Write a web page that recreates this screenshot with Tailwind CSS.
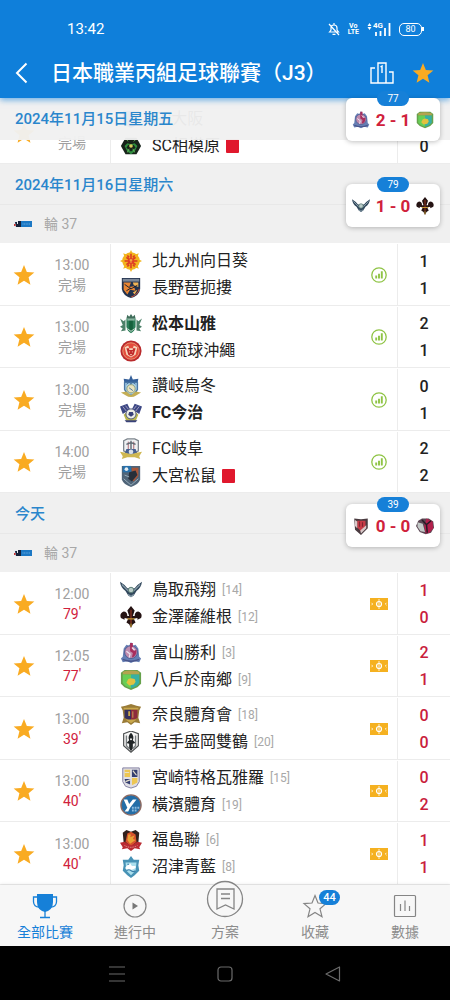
<!DOCTYPE html>
<html lang="zh-Hant">
<head>
<meta charset="utf-8">
<meta name="viewport" content="width=device-width, initial-scale=1">
<title>日本職業丙組足球聯賽（J3）</title>
<script src="https://cdn.jsdelivr.net/npm/@tailwindcss/browser@4"></script>
</head>
<body class="min-h-screen flex flex-col bg-white font-['Roboto','Noto_Sans_CJK_TC',sans-serif] text-[#222]">

<svg class="hidden" aria-hidden="true">
  <symbol id="star" viewBox="0 0 24 24"><path fill="#f9ab22" d="M12 1l3.100 7.600 8.200.6-6.300 5.300 2 8L12 18.200l-7 4.300 2-8L.7 9.200l8.200-.6z"/></symbol>
  <symbol id="stats" viewBox="0 0 16 16"><circle cx="8" cy="8" r="7.200" fill="none" stroke="#8fc445" stroke-width="1.300"/><path d="M5.200 8.500v3M8 6.800v4.700M10.800 4.200v7.300" stroke="#8fc445" stroke-width="1.900"/></symbol>
  <symbol id="pitch" viewBox="0 0 18 12"><path fill="#f5b120" d="M0 0h18v12H0z"/><circle cx="9" cy="6" r="2.500" fill="none" stroke="#fff" stroke-width="1.200"/><path stroke="#fff" d="M9 1v10M1.500 4.800l1.200 1.200-1.200 1.200M16.500 4.800L15.300 6l1.200 1.200" fill="none" stroke-width=".8"/></symbol>
  <symbol id="league" viewBox="0 0 18 6"><path fill="#e9edf2" d="M0 0h6v6H0z"/><path fill="#16213a" d="M1 1h2v2h1V0h3v6H2z"/><path fill="#c33" d="M0 3h1.500v2H0z"/><path fill="#1c78c4" d="M7 0h11v6H7z"/><path stroke="#4f9ad6" d="M8.500 3h8" stroke-dasharray="1 .6" stroke-width="1.500"/></symbol>

  <symbol id="osaka" viewBox="0 0 24 24"><path fill="#2a5da8" d="M3 3h18v10q-2 6-9 9-7-3-9-9z"/></symbol>
  <symbol id="sagamihara" viewBox="0 0 24 24"><path fill="#17231a" d="M6 3h12l5 9-5 9H6l-5-9z"/><path fill="#2f8b3d" d="M5 12l3-3 4 1 4-1 3 3-3 6-4 3-4-3z"/><path fill="#17231a" d="M9 11h6l2 3-5 4-5-4z"/><circle cx="12" cy="12" r="2" fill="#d9cc5a"/><path stroke="#68b35c" d="M8 19l2-4M16 19l-2-4M7 5l2 2M17 5l-2 2"/></symbol>
  <symbol id="kitakyushu" viewBox="0 0 24 24"><g fill="#f2b41e"><circle cx="12" cy="12" r="9.500"/><path d="M12 0l3 6H9zM12 24l3-6H9zM0 12l6-3v6zM24 12l-6-3v6zM3.500 3.500L10 6l-4 4zM20.500 3.500L14 6l4 4zM3.500 20.500L10 18l-4-4zM20.500 20.500L14 18l4-4z"/></g><path stroke="#dc3a22" stroke-width="1.700" fill="none" d="M7 8l10 8M17 8L7 16M12 4v16M5 12h14M8 6l2 2M16 6l-2 2M8 18l2-2M16 18l-2-2"/><circle cx="12" cy="12" r="3.400" fill="#e2402a"/><path stroke="#f7d04b" d="M10.500 11h3M12 10v4"/></symbol>
  <symbol id="nagano" viewBox="0 0 24 24"><path fill="#22324e" d="M2 1h20v12q-1 7-10 10Q3 20 2 13z"/><path fill="#7c8797" d="M3 2h18v3H3z"/><path fill="#e98532" d="M4 6h8l-2 5 5-1 2 5-6-1-3 5-4-5z"/><path fill="#f1b455" d="M14 6h6v5l-5-2zM14 17l5-3-3 5z"/><path stroke="#151d30" d="M5 8l7 5 7-4M7 15l5-3" fill="none"/><path stroke="#d8573b" d="M12 22q8-3 9-9" fill="none"/></symbol>
  <symbol id="matsumoto" viewBox="0 0 24 24"><path fill="#2b7d58" d="M7 6h10v9q-1 5-5 7-4-2-5-7z"/><path fill="#3f6d5a" d="M8 2l2 2 2-3 2 3 2-2 1 4H7z"/><path fill="#4c8068" d="M0 6l4 3 2-2v12l-5 1 2-3-3-2 3-2zM24 6l-4 3-2-2v12l5 1-2-3 3-2-3-2z"/><path fill="#15613c" d="M10 8h4v10l-2 2-2-2z"/><path stroke="#cfe0d6" d="M8 7.500h8M8 17l4 3 4-3" fill="none"/></symbol>
  <symbol id="ryukyu" viewBox="0 0 24 24"><circle cx="12" cy="12" r="11.500" fill="#b92a2c"/><circle cx="12" cy="12" r="9" fill="#e34c3c" stroke="#f2b287" stroke-width=".8"/><path fill="#f6d6bb" d="M5 8l4-2 1 3h4l1-3 4 2-2 8-5 3-5-3z"/><path fill="#c12b2b" d="M7 9h3v2h4V9h3l-2 7-3 2-3-2z"/><path stroke="#f6d6bb" d="M10 13h1M13 13h1M11 16h2"/></symbol>
  <symbol id="sanuki" viewBox="0 0 24 24"><path fill="#35609a" d="M4 4l6 1 2-5 2 5 6-1-1 6H5z"/><path fill="#a4cbe2" stroke="#4a77a5" stroke-width="1.500" d="M5 8h14v8l-4 6H9l-4-6z"/><path fill="#c4ae55" d="M1 19l6-1 5 4 5-4 6 1-5 3q-6 4-12 0z"/><circle cx="12" cy="15" r="4.500" fill="#e9e3be" stroke="#8f9f74"/><path stroke="#3f6a9b" d="M7 10l3-2 2 2 2-2 3 2M10 14l4 3" fill="none"/></symbol>
  <symbol id="imabari" viewBox="0 0 24 24"><path fill="#3c4784" d="M0 5l8-3 3 6-8 5zM24 5l-8-3-3 6 8 5z"/><path stroke="#a9a5c4" d="M3 5l4 5M6 4l4 5M21 5l-4 5M18 4l-4 5"/><path fill="#b9b64c" d="M4 14l4-4h8l4 4-3 7H7z"/><circle cx="12" cy="13" r="5.500" fill="#eceee5" stroke="#464f77"/><path fill="#39427a" d="M10 11h4l1 3-3 2-3-2zM5 20h14l-2 2H7z"/></symbol>
  <symbol id="gifu" viewBox="0 0 24 24"><path fill="#eff1f3" stroke="#7d858d" stroke-width="1.400" d="M4 3l4-2h8l4 2v11l-8 5-8-5z"/><path stroke="#a95c68" d="M9 4v10M15 4v10"/><path stroke="#5e6872" stroke-width="1.500" d="M12 3v9M7 7l5-2 5 2" fill="none"/><path fill="#46608f" d="M7 12h10l2 5H5z"/><path fill="#ceb751" d="M0 15l6 1 6 2 6-2 6-1-3 5 1 3-6-2H8l-6 2 1-3z"/><circle cx="12" cy="15" r="2.500" fill="#d9e1e8"/></symbol>
  <symbol id="omiya" viewBox="0 0 24 24"><path fill="#4f6478" d="M2 1h20v15q-2 5-10 8Q4 21 2 16z"/><path fill="#2870aa" d="M3 1h9v7H3z"/><circle cx="7" cy="4.500" r="2" fill="#e8edf0"/><path fill="#a85639" d="M13 3h7v9l-5 6-4-4 2-5z"/><path fill="#272f39" d="M10 8l7-2 2 5-6 7-4-3z"/><path stroke="#9cb2bf" d="M4 15l8 7 8-7M5 11l5 2" fill="none"/></symbol>
  <symbol id="tottori" viewBox="0 0 24 24"><path fill="#32485d" d="M0 3q5 3 8 7h8q3-4 8-7-1 7-6 10l-3 5-3 2-3-2-3-5Q1 10 0 3z"/><path stroke="#899eaa" stroke-width="1.300" fill="none" d="M2 6l7 7M22 6l-7 7M9 17l3 2 3-2"/><circle cx="12" cy="12" r="3" fill="#b9cbc8" stroke="#547671"/></symbol>
  <symbol id="kanazawa" viewBox="0 0 24 24"><path fill="#251313" d="M12 0l4 5-2 6h2q0-5 4-5 5 2 3 7l-4 2v-2l-4 1 2 4-3 2-2 4-2-4-3-2 2-4-4-1v2l-4-2Q-1 8 4 6q4 0 4 5h2L8 5z"/><path fill="#6d2a1d" d="M11 4h2v15h-2z"/><path stroke="#c79a35" stroke-width="1.300" d="M8 14h8M12 19v4"/></symbol>
  <symbol id="toyama" viewBox="0 0 24 24"><path fill="#667fb4" d="M4 7l3-4 3 1 2-4 2 4 3-1 3 4 1 9 2 2-2 4-5-1-4 2-4-2-5 1-2-4 2-2z"/><circle cx="12" cy="11" r="7" fill="#c08cae" stroke="#475a91"/><path fill="#a82e5d" d="M11 1h3v8h4q0 7-5 8l1-5-3-2z"/><path stroke="#ece3ef" stroke-width="1.300" d="M7 10l4 3-1 4M13 6l3 3" fill="none"/><path stroke="#49558c" stroke-width="1.500" fill="none" d="M3 19q9 4 18 0"/></symbol>
  <symbol id="hachinohe" viewBox="0 0 24 24"><path fill="#66a14b" d="M1 4l4-3h14l4 3v12l-4 4-7 3-7-3-4-4z"/><path fill="#b4a34f" d="M3 3q9-3 18 0v3H3z"/><path fill="#37b0a3" d="M12 6h9v9q-2 4-9 6z"/><path fill="#67cf56" d="M3 6h9v15q-7-2-9-6z"/><path fill="#e2c13f" d="M9 11l3-1 4 1 1 3-2 3-5 1-3-3z"/></symbol>
  <symbol id="nara" viewBox="0 0 24 24"><path fill="#9a7c38" d="M1 3l5-1 6-2 6 2 5 1-2 4-1 8 2 6-6-1-4 3-4-3-6 1 2-6-1-8z"/><path fill="#352f5c" d="M5 6h7v13l-7-4z"/><path fill="#8d2c3e" d="M12 6h7v9l-7 4z"/><path fill="#c9a84b" d="M4 4h16v2H4zM6 17h12l-6 4zM9 8h2v5H9z"/><path stroke="#d0a956" d="M14 8v7"/></symbol>
  <symbol id="iwate" viewBox="0 0 24 24"><path fill="#f7f7f6" stroke="#4c4f50" stroke-width="1.300" d="M4 3l8-3 8 3v13l-8 7-8-7z"/><path fill="#202426" d="M12 2q4 4 2 8l3 3-3 1v5l-2 3-2-3v-5l-3-1 3-3q-2-4 2-8z"/><path stroke="#797e80" stroke-width="1.500" d="M7 5v11l3 3M17 5v11l-3 3" fill="none"/><circle cx="12" cy="9" r="1" fill="#fff"/></symbol>
  <symbol id="miyazaki" viewBox="0 0 24 24"><path fill="#dfdee4" stroke="#7d799c" d="M3 1h18v15l-3 5-6 2-6-2-3-5z"/><path fill="#edc653" d="M5 3h6v8H5zM13 12h6v5l-6 3z"/><path fill="#343e70" d="M13 3h6v8h-6zM5 13h6v6l-5-2z"/><path stroke="#e6dfca" stroke-width="1.300" d="M5 6h5M14 4l4 5M6 16l5-2" fill="none"/></symbol>
  <symbol id="yokohama" viewBox="0 0 24 24"><circle cx="12" cy="12" r="11" fill="#246ea7" stroke="#8c6a62" stroke-width="1.500"/><path fill="#fff" d="M4 6h4l2 5 4-5h4l-7 9-2 4H5l3-4z"/><path stroke="#8dbce0" stroke-width="2" d="M13 15h8M13 18h5" stroke-dasharray="2 1"/></symbol>
  <symbol id="fukushima" viewBox="0 0 24 24"><path fill="#32201c" d="M3 4l4-3 5 2 5-2 4 3-1 11-8 6-8-6z"/><path fill="#d8532c" d="M8 5l4-2 5 3 1 8-6 5-6-5z"/><path fill="#e9a337" d="M9 6h3l-1 3 5-2-2 4 3 1-6 4-3-4z"/><path fill="#b92b31" d="M0 15l5-1 7 4 7-4 5 1-3 5 1 2-6-1-4 3-4-3-6 1 1-2z"/><path stroke="#edb1aa" d="M5 18q7 4 14 0" fill="none" stroke-dasharray="1 1"/></symbol>
  <symbol id="numazu" viewBox="0 0 24 24"><path fill="#4792b5" d="M3 4h6l3-4 3 4h6l-1 6 1 6-5 5-4 3-4-3-5-5 1-6z"/><path fill="#abdfed" d="M6 7h12l-1 9-5 5-5-5z"/><path fill="#fff" d="M6 12l5-4 2 3h4v2q-6 4-11 1z"/><path stroke="#377ca8" stroke-width="1.300" d="M7 16q3-2 5 0t5 0M8 9h2" fill="none"/></symbol>
  <symbol id="kobe" viewBox="0 0 24 24"><path fill="#4a3b40" d="M3 2l9 1 9-1v13l-9 9-8-7z"/><path fill="#c83c48" d="M7 5h11v9l-6 5-5-5z"/><path fill="#d9c8c8" d="M4 4l3 2v9l-3-3zM11 18l8-7v4l-7 7z"/><path stroke="#812530" stroke-width="1.500" d="M10 6v7M14 7v6"/></symbol>
  <symbol id="kashima" viewBox="0 0 24 24"><path fill="#5b4653" d="M3 5l5-3h9l6 4 1 8-4 7-7 2-8-3-5-8z"/><path fill="#b31f4c" d="M14 2l8 4 1 9-5 6-5 1-2-10z"/><path fill="#c4cac8" d="M2 7l7 2 3 11-6-1-4-6z"/><path stroke="#241b24" stroke-width="2" fill="none" d="M8 4l6 6 1 11M20 5l-7 6"/></symbol>
</svg>

<header class="relative z-10 bg-[#0f7fda] text-white shadow-[0_2px_6px_rgba(15,127,218,0.6)]">
  <div class="flex items-center justify-between pt-[18px] pr-7 pl-[67px]">
    <time class="text-[15px] leading-[22px]">13:42</time>
    <div class="flex items-center gap-2" aria-hidden="true">
      <svg class="h-3.5 w-3" viewBox="0 0 12 14" fill="none" stroke="#fff" stroke-width="1.200"><path d="M1.500 10L3 8V6q0-3 3-3 3 0 3 3v2l1.500 2zM4.500 12.300h3M6 1v2M1 2l10 11"/></svg>
      <span class="flex flex-col text-center text-[7px] leading-[6px] font-bold"><span>Vo</span><span>LTE</span></span>
      <span class="flex h-3.5 items-end">
        <svg class="h-3.5 w-1.5" viewBox="0 0 6 14" fill="#fff"><path d="M2.500 1L4.500 4h-4zM2.500 8L.5 5h4z"/></svg>
        <span class="self-start text-[8px] leading-[8px] font-bold">4G</span>
        <svg class="-ml-2 h-3.5 w-4" viewBox="0 0 16 14" stroke="#fff" stroke-width="1.800"><path d="M1 10v4M5.500 9v5M10 6v8M14.500 1v13"/></svg>
      </span>
      <span class="relative flex h-[13px] w-[23px] items-center justify-center rounded-[5px] border border-white text-[9px] leading-none">80<i class="absolute -right-[3px] h-1 w-0.5 bg-white"></i></span>
    </div>
  </div>
  <div class="flex h-[58px] items-center pr-4 pl-[15px] pt-2">
    <button class="flex h-8 w-9 items-center" aria-label="返回"><svg class="h-[22px] w-[13px]" viewBox="0 0 13 22" fill="none" stroke="#fff" stroke-width="2"><path d="M11.500 1.500L2 11l9.500 9.500"/></svg></button>
    <h1 class="flex-1 text-[21px] leading-8 font-medium whitespace-nowrap">日本職業丙組足球聯賽（J3）</h1>
    <button aria-label="排名"><svg class="h-6 w-6" viewBox="0 0 24 24" fill="none" stroke="#fff" stroke-width="1.400"><path d="M8 22V2h8v20M5 7H1v15h22V11h-4M10.500 6l1.500-1v7"/></svg></button>
    <button class="ml-[18px]" aria-label="收藏聯賽"><svg class="h-[22px] w-[22px]"><use href="#star"/></svg></button>
  </div>
</header>

<main class="relative flex-1">
  <h2 class="sticky top-0 z-[5] h-[42px] bg-[#f0f0f0]/96 pl-[15px] text-[15px] leading-[43px] font-medium text-[#2a86cc]">2024年11月15日星期五</h2>
  <div class="absolute top-0 right-2.5 z-20" data-live="77,toyama,2 - 1,hachinohe"></div>
  <div class="-mt-[39px]" data-list="friday"></div>

  <section class="relative">
    <h2 class="h-[41px] border-b border-[#e8e8e8] bg-[#f0f0f0] pl-[15px] text-[15px] leading-[42px] font-medium text-[#2a86cc]">2024年11月16日星期六</h2>
    <p class="flex h-[38px] items-center gap-3 bg-[#f0f0f0] pl-3.5 text-sm text-[#a8a8a8]"><svg class="h-1.5 w-[18px]"><use href="#league"/></svg>輪 37</p>
    <div class="absolute top-5 right-2.5 z-20" data-live="79,tottori,1 - 0,kanazawa"></div>
    <div data-list="saturday"></div>
  </section>

  <section class="relative">
    <h2 class="h-[41px] border-b border-[#e8e8e8] bg-[#f0f0f0] pl-[15px] text-[15px] leading-[42px] font-medium text-[#2a86cc]">今天</h2>
    <p class="flex h-[38px] items-center gap-3 bg-[#f0f0f0] pl-3.5 text-sm text-[#a8a8a8]"><svg class="h-1.5 w-[18px]"><use href="#league"/></svg>輪 37</p>
    <div class="absolute top-[11px] right-2.5 z-20" data-live="39,kobe,0 - 0,kashima"></div>
    <div data-list="today"></div>
  </section>
</main>

<nav class="relative z-10 grid h-[61px] grid-cols-5 grid-rows-[100%] bg-[#f7f7f7] text-sm text-[#8c8c8c] shadow-[0_-1px_3px_rgba(0,0,0,0.08)]">
  <a href="#all" class="flex flex-col items-center justify-end pb-1 leading-5 text-[#1680d8]">
    <svg class="mb-[3px] h-[26px] w-[26px] shrink-0" viewBox="0 0 26 26"><path fill="#1680d8" d="M5 1h16v8q0 8-8 10-8-2-8-10z"/><path fill="none" stroke="#1680d8" stroke-width="1.300" d="M5 4H1.500v5Q2 14 7 14M21 4h3.500v5q-.5 5-5.500 5M13 18v6M8 24.500h10"/></svg>全部比賽</a>
  <a href="#live" class="flex flex-col items-center justify-end pb-1 leading-5">
    <svg class="mb-[3px] h-[26px] w-[26px] shrink-0" viewBox="0 0 26 26"><circle cx="13" cy="13" r="11" fill="none" stroke="#858585" stroke-width="1.200"/><path fill="#777" d="M10.500 9.500l5.500 3.500-5.500 3.500z"/></svg>進行中</a>
  <a href="#tips" class="flex flex-col items-center justify-end pb-1 leading-5">
    <svg class="mb-1 h-[38px] w-[38px] shrink-0" viewBox="0 0 38 38"><circle cx="19" cy="19" r="17.500" fill="#f7f7f7" stroke="#858585" stroke-width="1.300"/><path fill="none" stroke="#858585" stroke-width="1.300" d="M11 9h17v20l-8.500-4-8.500 4zM15 14h9M15 18.500h9"/></svg>方案</a>
  <a href="#fav" class="relative flex flex-col items-center justify-end pb-1 leading-5">
    <svg class="mb-[3px] h-[26px] w-[26px] shrink-0" viewBox="0 0 26 26" fill="none" stroke="#858585" stroke-width="1.200"><path d="M13 2.500l3 7.500 8 .6-6 5.200 2 8-7-4.300-7 4.300 2-8-6-5.200 8-.6z"/></svg>
    <span class="absolute top-[5px] left-1/2 ml-1 h-[15px] w-[21px] rounded-full bg-[#1680d8] text-center text-[11px] leading-[15px] font-medium text-white">44</span>收藏</a>
  <a href="#data" class="flex flex-col items-center justify-end pb-1 leading-5">
    <svg class="mb-[3px] h-[26px] w-[26px] shrink-0" viewBox="0 0 26 26" fill="none" stroke="#858585" stroke-width="1.200"><rect x="2.500" y="2.500" width="21" height="21" rx="1"/><path d="M8.500 11v7M13 7.500V18M17.500 13v5"/></svg>數據</a>
</nav>

<footer class="flex h-[55px] items-center justify-center gap-[92px] bg-black">
  <button aria-label="最近"><svg class="h-4 w-4" viewBox="0 0 16 16" stroke="#6b6b6b" stroke-width="1.200"><path d="M0 1h16M0 8h16M0 15h16"/></svg></button>
  <button aria-label="主畫面"><svg class="h-4 w-4" viewBox="0 0 16 16" fill="none" stroke="#6b6b6b" stroke-width="1.200"><rect x="1" y="1" width="14" height="14" rx="3"/></svg></button>
  <button aria-label="返回"><svg class="h-4 w-4" viewBox="0 0 16 16" fill="none" stroke="#6b6b6b" stroke-width="1.200" stroke-linejoin="round"><path d="M14.500 1v14L1 8z"/></svg></button>
</footer>

<script>
// Team: [crest, name, score, rank, flags]; flags: "w" winner, "r" red card
const matches = {
  friday: [['&nbsp;', '', ['osaka', 'FC大阪', '&nbsp;'], ['sagamihara', 'SC相模原', 0, '', 'r']]],
  saturday: [
    ['13:00', '', ['kitakyushu', '北九州向日葵', 1], ['nagano', '長野琶扼摟', 1]],
    ['13:00', '', ['matsumoto', '松本山雅', 2, '', 'w'], ['ryukyu', 'FC琉球沖繩', 1]],
    ['13:00', '', ['sanuki', '讚岐烏冬', 0], ['imabari', 'FC今治', 1, '', 'w']],
    ['14:00', '', ['gifu', 'FC岐阜', 2], ['omiya', '大宮松鼠', 2, '', 'r']],
  ],
  today: [
    ['12:00', '79', ['tottori', '鳥取飛翔', 1, '14'], ['kanazawa', '金澤薩維根', 0, '12']],
    ['12:05', '77', ['toyama', '富山勝利', 2, '3'], ['hachinohe', '八戶於南鄉', 1, '9']],
    ['13:00', '39', ['nara', '奈良體育會', 0, '18'], ['iwate', '岩手盛岡雙鶴', 0, '20']],
    ['13:00', '40', ['miyazaki', '宮崎特格瓦雅羅', 0, '15'], ['yokohama', '橫濱體育', 2, '19']],
    ['13:00', '40', ['fukushima', '福島聯', 1, '6'], ['numazu', '沼津青藍', 1, '8']],
  ],
};
const team = ([crest, name, , rank, flag]) => `
  <div class="flex h-[27px] items-center">
    <svg class="mr-2.5 h-[22px] w-[22px] shrink-0"><use href="#${crest}"/></svg>
    <span class="${flag === 'w' ? 'font-bold' : 'font-normal'}">${name}</span>
    ${rank ? `<span class="ml-1.5 text-xs text-[#a8a8a8]">[${rank}]</span>` : ''}
    ${flag === 'r' ? '<i class="ml-1.5 h-3.5 w-[13px] rounded-[1px] bg-[#e0182d]"></i>' : ''}
  </div>`;
const row = ([time, minute, home, away]) => `
  <article class="flex h-[62px] items-stretch border-b border-[#ececec] pt-px odd:h-[63px] only:h-[62px]">
    <button class="flex w-12 items-center justify-center" aria-label="收藏"><svg class="h-[22px] w-[22px]"><use href="#star"/></svg></button>
    <div class="mr-3.5 flex w-12 flex-col justify-center text-center text-sm leading-5 text-[#a0a0a0]">
      <time>${time}</time>
      ${minute ? `<span class="text-[#d0213c]">${minute}<sup class="top-0 align-[2px] text-sm leading-none">'</sup></span>` : '<span>完場</span>'}
    </div>
    <div class="flex flex-1 flex-col justify-center border-l border-[#ececec] pl-[9px] text-base whitespace-nowrap">${team(home)}${team(away)}</div>
    <div class="flex w-[36px] items-center justify-center">${minute
      ? '<svg class="h-3 w-[18px]"><use href="#pitch"/></svg>'
      : '<svg class="h-4 w-4"><use href="#stats"/></svg>'}</div>
    <div class="flex w-[53px] flex-col justify-center border-l border-[#ececec] text-center text-base leading-[27px] font-medium ${minute ? 'text-[#c9203c]' : 'text-[#222]'}"><span>${home[2]}</span><span>${away[2]}</span></div>
  </article>`;
document.querySelectorAll('[data-list]').forEach(el => { el.innerHTML = matches[el.dataset.list].map(row).join(''); });
document.querySelectorAll('[data-live]').forEach(el => {
  const [minute, home, score, away] = el.dataset.live.split(',');
  el.innerHTML = `
    <div class="relative flex h-[43px] w-[94px] items-center justify-between rounded-md bg-white px-1.5 shadow-[0_1px_5px_rgba(0,0,0,0.25)]">
      <span class="absolute -top-[7px] left-1/2 h-[15px] w-8 -translate-x-1/2 rounded-full bg-[#1680d8] text-center text-[10px] leading-[15px] text-white">${minute}</span>
      <svg class="h-[18px] w-[18px]"><use href="#${home}"/></svg>
      <strong class="text-[17px] leading-6 font-bold text-[#d0213c]">${score}</strong>
      <svg class="h-[18px] w-[18px]"><use href="#${away}"/></svg>
    </div>`;
});
</script>
</body>
</html>
